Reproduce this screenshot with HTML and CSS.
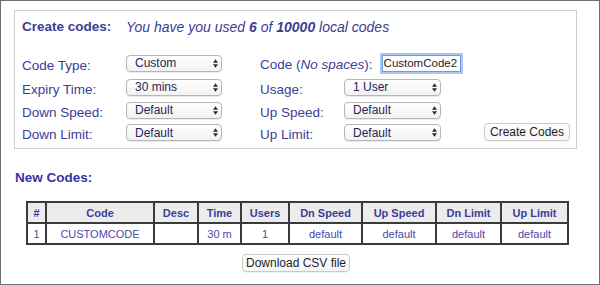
FILE: index.html
```html
<!DOCTYPE html>
<html lang="en">
<head>
    <meta charset="UTF-8">
    <title>Create codes</title>
    <link rel="stylesheet" href="styles.css">
</head>
<body>
    <div class="frame">
        <div class="create-box">
            <div class="form">
                <div class="title">Create codes:</div>
                <div class="usage-note">You have you used <b>6</b> of <b>10000</b> local codes</div>

                <label class="label">Code Type:</label>
                <span class="select">
                    <select><option>Custom</option></select>
                    <svg class="arrows" viewBox="0 0 6 10"><path d="M0 4 L3 0 L6 4 Z M0 6 L3 10 L6 6 Z"/></svg>
                </span>
                <div class="code-field">
                    <label class="label">Code (<i>No spaces</i>):</label>
                    <input class="code-input" type="text" value="CustomCode2">
                </div>

                <label class="label">Expiry Time:</label>
                <span class="select">
                    <select><option>30 mins</option></select>
                    <svg class="arrows" viewBox="0 0 6 10"><path d="M0 4 L3 0 L6 4 Z M0 6 L3 10 L6 6 Z"/></svg>
                </span>
                <label class="label">Usage:</label>
                <span class="select wide">
                    <select><option>1 User</option></select>
                    <svg class="arrows" viewBox="0 0 6 10"><path d="M0 4 L3 0 L6 4 Z M0 6 L3 10 L6 6 Z"/></svg>
                </span>
                <span></span>

                <label class="label">Down Speed:</label>
                <span class="select">
                    <select><option>Default</option></select>
                    <svg class="arrows" viewBox="0 0 6 10"><path d="M0 4 L3 0 L6 4 Z M0 6 L3 10 L6 6 Z"/></svg>
                </span>
                <label class="label">Up Speed:</label>
                <span class="select wide">
                    <select><option>Default</option></select>
                    <svg class="arrows" viewBox="0 0 6 10"><path d="M0 4 L3 0 L6 4 Z M0 6 L3 10 L6 6 Z"/></svg>
                </span>
                <span></span>

                <label class="label">Down Limit:</label>
                <span class="select">
                    <select><option>Default</option></select>
                    <svg class="arrows" viewBox="0 0 6 10"><path d="M0 4 L3 0 L6 4 Z M0 6 L3 10 L6 6 Z"/></svg>
                </span>
                <label class="label">Up Limit:</label>
                <span class="select wide">
                    <select><option>Default</option></select>
                    <svg class="arrows" viewBox="0 0 6 10"><path d="M0 4 L3 0 L6 4 Z M0 6 L3 10 L6 6 Z"/></svg>
                </span>
                <button class="btn create-btn">Create Codes</button>
            </div>
        </div>

        <h2 class="section-title">New Codes:</h2>

        <table class="codes">
            <colgroup>
                <col style="width: 19px">
                <col style="width: 108px">
                <col style="width: 44px">
                <col style="width: 43px">
                <col style="width: 48px">
                <col style="width: 73px">
                <col style="width: 74px">
                <col style="width: 65px">
                <col style="width: 67px">
            </colgroup>
            <thead>
                <tr>
                    <th>#</th>
                    <th>Code</th>
                    <th>Desc</th>
                    <th>Time</th>
                    <th>Users</th>
                    <th>Dn Speed</th>
                    <th>Up Speed</th>
                    <th>Dn Limit</th>
                    <th>Up Limit</th>
                </tr>
            </thead>
            <tbody>
                <tr>
                    <td>1</td>
                    <td>CUSTOMCODE</td>
                    <td></td>
                    <td>30 m</td>
                    <td>1</td>
                    <td>default</td>
                    <td>default</td>
                    <td>default</td>
                    <td>default</td>
                </tr>
            </tbody>
        </table>

        <div class="download">
            <button class="btn download-btn">Download CSV file</button>
        </div>
    </div>
</body>
</html>
```

FILE: styles.css
```css
* {
    margin: 0;
    padding: 0;
    box-sizing: border-box;
}

body {
    font-family: 'Liberation Sans', Arial, Helvetica, sans-serif;
    background: #fff;
    color: #3d3d94;
}

.frame {
    width: 600px;
    height: 285px;
    border: 1px solid #6e6e6e;
    padding: 9px 22px 0 13px;
}

.create-box {
    border: 1px solid #cfcfcf;
    padding: 8px 7px 4px 7px;
}

.form {
    display: grid;
    grid-template-columns: 104px 134px 84px 140px auto;
    grid-template-rows: 32px 24px 24px 22px 23px;
    align-items: center;
    font-size: 13.5px;
}

.title,
.usage-note {
    align-self: start;
}

.title {
    font-weight: bold;
}

.usage-note {
    grid-column: 2 / 6;
    font-style: italic;
    font-size: 14px;
}

.label {
    margin-top: 4px;
    white-space: nowrap;
}

.select {
    position: relative;
    display: inline-block;
    width: 96px;
    height: 17px;
}

.select.wide {
    width: 97px;
}

.select select {
    appearance: none;
    -webkit-appearance: none;
    width: 100%;
    height: 17px;
    padding: 0 0 0 8px;
    border: 1px solid #b6b6b6;
    border-radius: 4px;
    background: linear-gradient(#ffffff, #f2f2f2);
    box-shadow: 0 1px 1px rgba(0, 0, 0, 0.08);
    font-family: 'Liberation Sans', Arial, sans-serif;
    font-size: 12px;
    color: #26265a;
}

.select .arrows {
    position: absolute;
    right: 4px;
    top: 4px;
    width: 5px;
    height: 9px;
    fill: #2a2a3a;
}

.code-field {
    grid-column: 3 / 6;
    display: flex;
    align-items: center;
    gap: 9px;
}

.code-field .label {
    margin-top: 2px;
}

.code-input {
    width: 79px;
    height: 17px;
    padding: 0 1px;
    border: 1px solid #6d9de0;
    box-shadow: 0 0 0 2px #a9c8f0;
    font-family: 'Liberation Sans', Arial, sans-serif;
    font-size: 11.5px;
    color: #1c1c2e;
    outline: none;
}

.btn {
    height: 18px;
    border: 1px solid #c9c9c9;
    border-radius: 4px;
    background: linear-gradient(#ffffff, #f5f5f5);
    box-shadow: 0 1px 1px rgba(0, 0, 0, 0.06);
    font-family: 'Liberation Sans', Arial, sans-serif;
    font-size: 12px;
    color: #1e1e28;
}

.create-btn {
    width: 86px;
    margin-top: -1px;
}

.section-title {
    margin: 21px 0 16px 1px;
    font-size: 13.5px;
    font-weight: bold;
    color: #3535a0;
}

.codes {
    border-collapse: collapse;
    table-layout: fixed;
    width: 541px;
    margin-left: 12px;
    font-size: 11px;
    color: #4646a2;
}

.codes th,
.codes td {
    border: 2px solid #3b3b3b;
    height: 21px;
    text-align: center;
    white-space: nowrap;
}

.codes th {
    background: #ececec;
    font-weight: bold;
    color: #3d3d99;
}

.codes td {
    color: #4a4aa6;
}

.download {
    margin-top: 8px;
    padding-left: 228px;
}

.download-btn {
    width: 108px;
    height: 18px;
}
```
